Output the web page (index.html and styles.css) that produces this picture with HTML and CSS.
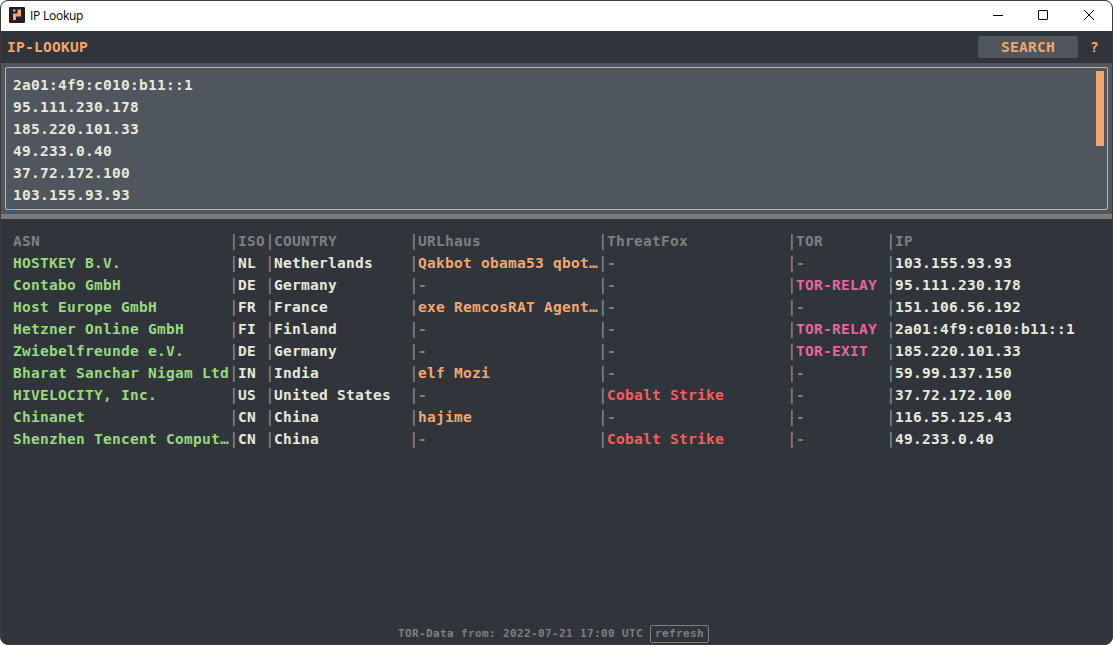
FILE: index.html
```html
<!DOCTYPE html>
<html lang="en">
<head>
<meta charset="utf-8">
<title>IP Lookup</title>
<link rel="stylesheet" href="styles.css">
</head>
<body>
<div class="window">
  <header class="titlebar">
    <svg class="logo" width="16" height="16" viewBox="0 0 16 16"><rect width="16" height="16" rx="1" fill="#202123"/><path d="M4 2.500h2.500v2H4zM8.500 2.500H12V9.500H7V13H4V6.500h4.500z" fill="#f4a66c"/></svg>
    <span class="title">IP Lookup</span>
    <svg class="controls" width="104" height="12" viewBox="0 0 104 12" fill="none" stroke="#000"><path d="M0 6.500h10"/><rect x="45.500" y="1.500" width="9" height="9" rx="0.500"/><path d="M91 1l10 10M101 1L91 11"/></svg>
  </header>
  <div class="toolbar">
    <span class="brand">IP-LOOKUP</span>
    <button class="search">SEARCH</button>
    <span class="help">?</span>
  </div>
  <div class="input-pane">
    <div class="input-box">
      <div class="lines"><div>2a01:4f9:c010:b11::1</div><div>95.111.230.178</div><div>185.220.101.33</div><div>49.233.0.40</div><div>37.72.172.100</div><div>103.155.93.93</div></div>
      <div class="scroll-thumb"></div>
    </div>
  </div>
  <div class="splitter"></div>
  <main class="results">
    <div class="row head"><span>ASN</span><i>|</i><span>ISO</span><i>|</i><span>COUNTRY</span><i>|</i><span>URLhaus</span><i>|</i><span>ThreatFox</span><i>|</i><span>TOR</span><i>|</i><span>IP</span></div>
    <div class="row"><span class="asn">HOSTKEY B.V.</span><i>|</i><span>NL</span><i>|</i><span>Netherlands</span><i>|</i><span class="url">Qakbot obama53 qbot…</span><i>|</i><span class="none">-</span><i>|</i><span class="none">-</span><i>|</i><span>103.155.93.93</span></div>
    <div class="row"><span class="asn">Contabo GmbH</span><i>|</i><span>DE</span><i>|</i><span>Germany</span><i>|</i><span class="none">-</span><i>|</i><span class="none">-</span><i>|</i><span class="tor">TOR-RELAY</span><i>|</i><span>95.111.230.178</span></div>
    <div class="row"><span class="asn">Host Europe GmbH</span><i>|</i><span>FR</span><i>|</i><span>France</span><i>|</i><span class="url">exe RemcosRAT Agent…</span><i>|</i><span class="none">-</span><i>|</i><span class="none">-</span><i>|</i><span>151.106.56.192</span></div>
    <div class="row"><span class="asn">Hetzner Online GmbH</span><i>|</i><span>FI</span><i>|</i><span>Finland</span><i>|</i><span class="none">-</span><i>|</i><span class="none">-</span><i>|</i><span class="tor">TOR-RELAY</span><i>|</i><span>2a01:4f9:c010:b11::1</span></div>
    <div class="row"><span class="asn">Zwiebelfreunde e.V.</span><i>|</i><span>DE</span><i>|</i><span>Germany</span><i>|</i><span class="none">-</span><i>|</i><span class="none">-</span><i>|</i><span class="tor">TOR-EXIT</span><i>|</i><span>185.220.101.33</span></div>
    <div class="row"><span class="asn">Bharat Sanchar Nigam Ltd</span><i>|</i><span>IN</span><i>|</i><span>India</span><i>|</i><span class="url">elf Mozi</span><i>|</i><span class="none">-</span><i>|</i><span class="none">-</span><i>|</i><span>59.99.137.150</span></div>
    <div class="row"><span class="asn">HIVELOCITY, Inc.</span><i>|</i><span>US</span><i>|</i><span>United States</span><i>|</i><span class="none">-</span><i>|</i><span class="fox">Cobalt Strike</span><i>|</i><span class="none">-</span><i>|</i><span>37.72.172.100</span></div>
    <div class="row"><span class="asn">Chinanet</span><i>|</i><span>CN</span><i>|</i><span>China</span><i>|</i><span class="url">hajime</span><i>|</i><span class="none">-</span><i>|</i><span class="none">-</span><i>|</i><span>116.55.125.43</span></div>
    <div class="row"><span class="asn">Shenzhen Tencent Comput…</span><i>|</i><span>CN</span><i>|</i><span>China</span><i>|</i><span class="none">-</span><i>|</i><span class="fox">Cobalt Strike</span><i>|</i><span class="none">-</span><i>|</i><span>49.233.0.40</span></div>
  </main>
  <footer class="status"><span>TOR-Data from: 2022-07-21 17:00 UTC</span><button class="refresh">refresh</button></footer>
</div>
</body>
</html>
```
FILE: styles.css
```css
* { box-sizing: border-box; }
body { margin: 0; background: #fff; }
button { margin: 0; padding: 0; border: 0; font: inherit; letter-spacing: inherit; color: inherit; }
.window {
  width: 1113px;
  height: 645px;
  display: flex;
  flex-direction: column;
  overflow: hidden;
  border: 1px solid #3d3d3d;
  border-radius: 8px;
  background: #30353c;
  color: #e8e8dc;
  font: bold 14.5px/22px "DejaVu Sans Mono", monospace;
  letter-spacing: 0.27px;
  white-space: nowrap;
}
.titlebar {
  flex: 0 0 30px;
  display: flex;
  align-items: center;
  padding: 0 15px 0 8px;
  background: #fff;
  color: #000;
  font: 12px/16px "Open Sans", sans-serif;
  letter-spacing: -0.25px;
}
.logo { margin-top: -2px; }
.title { margin-left: 5px; }
.controls { margin-left: auto; margin-top: -2px; }
.toolbar {
  flex: 0 0 32px;
  display: flex;
  align-items: center;
  padding: 0 13px 0 6px;
  color: #f4a66c;
}
.search {
  width: 100px;
  height: 22px;
  margin-left: auto;
  border-radius: 2px;
  background: #4f565d;
}
.help { margin-left: 12px; }
.input-pane { flex: 0 0 151px; padding: 4px; background: #4f565d; }
.input-box {
  height: 143px;
  display: flex;
  justify-content: space-between;
  padding: 6px 3px 0 7px;
  border: 1px solid #f4a66c;
  border-radius: 2px;
}
.scroll-thumb { width: 8px; height: 75px; margin-top: -3px; background: #f4a66c; }
.splitter { flex: 0 0 5px; background: #7b7b7b; }
.results { flex: 1; padding: 11px 12px 0; }
.row {
  display: grid;
  grid-template-columns: 216px 9px 27px 9px 135px 9px 180px 9px 180px 9px 90px 9px 1fr;
  height: 22px;
}
.row i { font-style: normal; font-weight: normal; font-size: 16px; color: #8c8c8c; }
.head, .none, .status { color: #7f7f7f; }
.asn { color: #98d97c; }
.url { color: #f4a66c; }
.fox { color: #fb5b5b; }
.tor { color: #e8649f; }
.status {
  flex: 0 0 19px;
  display: flex;
  justify-content: center;
  align-items: flex-start;
  gap: 7px;
  padding-right: 6px;
  font-size: 11px;
  line-height: 18px;
  letter-spacing: 0.378px;
}
.refresh {
  width: 59px;
  height: 18px;
  border: 1px solid #7f7f7f;
  border-radius: 2px;
  background: none;
  line-height: 16px;
}
```
